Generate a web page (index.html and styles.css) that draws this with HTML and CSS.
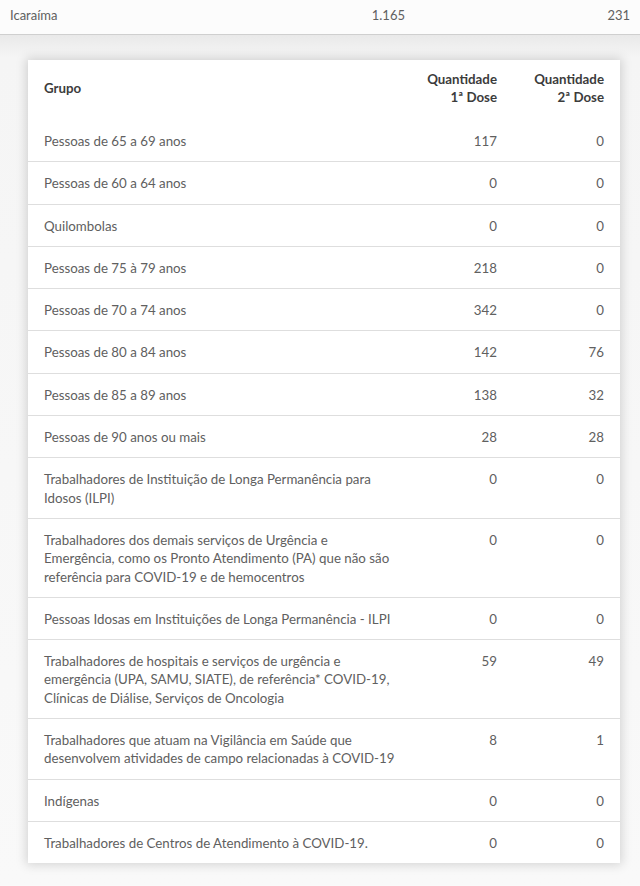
FILE: index.html
```html
<!DOCTYPE html>
<html lang="pt-BR">
<head>
<meta charset="utf-8">
<title>Vacinação por grupo</title>
<link rel="stylesheet" href="styles.css">
</head>
<body>
<div class="city-row">
  <span class="city-name">Icaraíma</span>
  <span class="city-d1">1.165</span>
  <span class="city-d2">231</span>
</div>
<div class="wrap">
  <div class="card">
    <table class="grid">
      <colgroup>
        <col class="c-group">
        <col class="c-d1">
        <col class="c-d2">
      </colgroup>
      <thead>
        <tr>
          <th class="th-group">Grupo</th>
          <th class="num">Quantidade<br>1ª Dose</th>
          <th class="num">Quantidade<br>2ª Dose</th>
        </tr>
      </thead>
      <tbody>
        <tr><td>Pessoas de 65 a 69 anos</td><td class="num">117</td><td class="num">0</td></tr>
        <tr><td>Pessoas de 60 a 64 anos</td><td class="num">0</td><td class="num">0</td></tr>
        <tr><td>Quilombolas</td><td class="num">0</td><td class="num">0</td></tr>
        <tr><td>Pessoas de 75 à 79 anos</td><td class="num">218</td><td class="num">0</td></tr>
        <tr><td>Pessoas de 70 a 74 anos</td><td class="num">342</td><td class="num">0</td></tr>
        <tr><td>Pessoas de 80 a 84 anos</td><td class="num">142</td><td class="num">76</td></tr>
        <tr><td>Pessoas de 85 a 89 anos</td><td class="num">138</td><td class="num">32</td></tr>
        <tr><td>Pessoas de 90 anos ou mais</td><td class="num">28</td><td class="num">28</td></tr>
        <tr><td>Trabalhadores de Instituição de Longa Permanência para Idosos (ILPI)</td><td class="num">0</td><td class="num">0</td></tr>
        <tr><td>Trabalhadores dos demais serviços de Urgência e Emergência, como os Pronto Atendimento (PA) que não são referência para COVID-19 e de hemocentros</td><td class="num">0</td><td class="num">0</td></tr>
        <tr><td>Pessoas Idosas em Instituições de Longa Permanência - ILPI</td><td class="num">0</td><td class="num">0</td></tr>
        <tr><td>Trabalhadores de hospitais e serviços de urgência e emergência (UPA, SAMU, SIATE), de referência* COVID-19, Clínicas de Diálise, Serviços de Oncologia</td><td class="num">59</td><td class="num">49</td></tr>
        <tr><td>Trabalhadores que atuam na Vigilância em Saúde que desenvolvem atividades de campo relacionadas à COVID-19</td><td class="num">8</td><td class="num">1</td></tr>
        <tr><td>Indígenas</td><td class="num">0</td><td class="num">0</td></tr>
        <tr><td>Trabalhadores de Centros de Atendimento à COVID-19.</td><td class="num">0</td><td class="num">0</td></tr>
      </tbody>
    </table>
  </div>
</div>
</body>
</html>
```

FILE: styles.css
```css
* { box-sizing: border-box; }
html, body {
  margin: 0;
  padding: 0;
  background: #fafafa;
  font-family: Lato, "Open Sans", "Liberation Sans", sans-serif;
  color: #606060;
}
.city-row {
  display: grid;
  grid-template-columns: 350px 45px 1fr;
  align-items: center;
  height: 35px;
  padding: 0 10px 5px 10px;
  font-size: 13px;
  border-bottom: 1px solid #cfcfcf;
  background: #fcfcfc;
}
.city-d1 { text-align: right; }
.city-d2 { text-align: right; }
.wrap {
  padding: 25px 20px 22px 28px;
  background: linear-gradient(#e9e9e9 0, #f5f5f5 22px, #f9f9f9 100%);
}
.card {
  width: 592px;
  background: #fff;
  box-shadow: 0 0 10px 2px rgba(0, 0, 0, 0.15);
}
.grid {
  width: 100%;
  border-collapse: collapse;
  table-layout: fixed;
  font-size: 13.3px;
}
.c-group { width: 383px; }
.c-d1 { width: 102px; }
.c-d2 { width: 107px; }
.grid th {
  font-weight: 700;
  color: #3c3c3c;
  line-height: 18px;
  padding: 9px 16px 14px 16px;
  vertical-align: middle;
  height: 60px;
}
.grid .th-group { text-align: left; }
.grid td {
  line-height: 18.3px;
  padding: 12px 16px 11px 16px;
  vertical-align: top;
  border-top: 1px solid #dedede;
}
.grid tbody tr:first-child td { border-top: none; }
.grid .num { text-align: right; }
```
